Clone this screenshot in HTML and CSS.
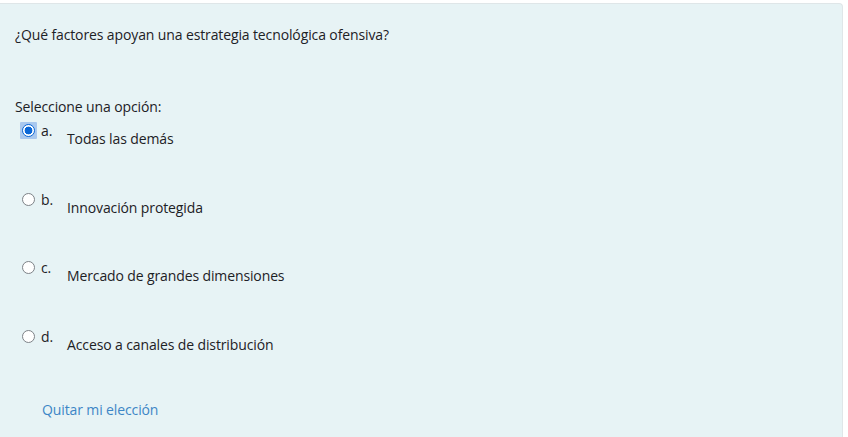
FILE: index.html
```html
<!DOCTYPE html>
<html lang="es">
<head>
<meta charset="utf-8">
<title>Pregunta</title>
<link rel="stylesheet" href="styles.css">
</head>
<body>
<div class="card">
  <div class="qtext">¿Qué factores apoyan una estrategia tecnológica ofensiva?</div>
  <div class="prompt">Seleccione una opción:</div>
  <div class="answers">
    <div class="option">
      <span class="radio-wrap focused"><span class="radio checked"></span></span>
      <span class="num">a.</span>
      <span class="label">Todas las demás</span>
    </div>
    <div class="option">
      <span class="radio-wrap"><span class="radio"></span></span>
      <span class="num">b.</span>
      <span class="label">Innovación protegida</span>
    </div>
    <div class="option">
      <span class="radio-wrap"><span class="radio"></span></span>
      <span class="num">c.</span>
      <span class="label">Mercado de grandes dimensiones</span>
    </div>
    <div class="option">
      <span class="radio-wrap"><span class="radio"></span></span>
      <span class="num">d.</span>
      <span class="label">Acceso a canales de distribución</span>
    </div>
  </div>
  <a class="clear" href="#">Quitar mi elección</a>
</div>
</body>
</html>
```
FILE: styles.css
```css
html, body {
  margin: 0;
  padding: 0;
  background: #ffffff;
}
body {
  padding-top: 3px;
  font-family: "Open Sans", "Noto Sans", "Liberation Sans", sans-serif;
  font-size: 14px;
  letter-spacing: -0.12px;
  color: #1d2125;
  overflow: hidden;
}
.card {
  margin-left: -6px;
  width: 849px;
  height: 434px;
  box-sizing: border-box;
  background: #e7f3f5;
  border: 1px solid #dfe6e8;
  border-bottom: none;
  border-radius: 4px 4px 0 0;
  padding: 20px 0 0 20px;
}
.qtext {
  line-height: 22px;
  height: 22px;
}
.prompt {
  margin-top: 50px;
  line-height: 22px;
  height: 22px;
}
.answers {
  margin-top: 2px;
  display: flex;
  flex-direction: column;
  gap: 38.5px;
}
.option {
  display: flex;
  align-items: flex-start;
  height: 30px;
}
.radio-wrap {
  width: 17px;
  height: 17px;
  margin: 2px 0 0 5px;
  display: flex;
  align-items: center;
  justify-content: center;
  border-radius: 1px;
}
.radio-wrap.focused {
  background: #a9c8ee;
}
.radio {
  width: 13px;
  height: 13px;
  box-sizing: border-box;
  border-radius: 50%;
  border: 1px solid #7d8287;
  background: #ffffff;
}
.radio.checked {
  border-color: #0b67d6;
  background: radial-gradient(circle, #0b67d6 0 3.6px, #ffffff 4.2px);
}
.num {
  margin-left: 4px;
  line-height: 22px;
  width: 26px;
}
.label {
  padding-top: 8px;
  line-height: 22px;
}
.clear {
  display: inline-block;
  margin-top: 43px;
  margin-left: 27px;
  line-height: 22px;
  color: #3d86c6;
  text-decoration: none;
}
```
